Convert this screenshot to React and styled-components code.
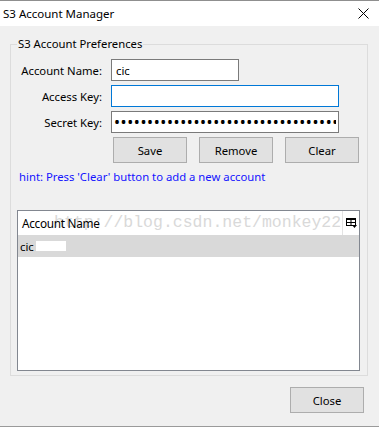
import React from 'react'
import styled, { createGlobalStyle } from 'styled-components'

const GlobalStyle = createGlobalStyle`
    html, body { margin: 0; padding: 0; }
    body {
        font-family: "Noto Sans", "Open Sans", sans-serif;
        font-size: 11.3px;
        background: #f0f0f0;
        color: #000;
    }
`

const Window = styled.div`
    width: 379px;
    height: 427px;
    box-sizing: border-box;
    display: flex;
    flex-direction: column;
    border-top: 1px solid #8f8f8f;
    border-bottom: 1px solid #9a9a9a;
`

const TitleBar = styled.div`
    height: 25px;
    background: #fff;
    display: flex;
    align-items: center;
    justify-content: space-between;
    padding: 0 10px 0 3px;
    font-size: 11.5px;
`

const Body = styled.div`
    flex: 1;
    background: #f0f0f0;
    padding: 10px 11px 0 10px;
    display: flex;
    flex-direction: column;
`

const GroupBox = styled.fieldset`
    margin: 0;
    padding: 7px 7px 4px 6px;
    border: 1px solid #dcdcdc;
    min-width: 0;
`

const Legend = styled.legend`
    padding: 0 1px;
    line-height: 16px;
`

const FormRow = styled.div`
    display: flex;
    align-items: center;
    height: 22px;
    margin-bottom: 4px;
`

const Label = styled.label`
    width: 85px;
    margin-right: 9px;
    text-align: right;
    white-space: nowrap;
`

const TextBox = styled.input`
    width: ${p => p.w}px;
    height: 22px;
    box-sizing: border-box;
    border: 1px solid ${p => (p.focused ? '#0078d7' : '#7a7a7a')};
    padding: 0 ${p => (p.type === 'password' ? 2 : 4)}px;
    font-family: inherit;
    font-size: ${p => (p.type === 'password' ? 16 : 11.3)}px;
    letter-spacing: ${p => (p.type === 'password' ? '0.6px' : 'normal')};
    background: #fff;
    outline: none;
    color: #000;
`

const ButtonRow = styled.div`
    display: flex;
    gap: 12px;
    margin-left: 96px;
`

const Button = styled.button`
    width: 74px;
    height: 26px;
    box-sizing: border-box;
    background: #e1e1e1;
    border: 1px solid #adadad;
    font-family: inherit;
    font-size: 11.3px;
    color: #000;
    padding: 0;
`

const Hint = styled.div`
    margin-top: 6px;
    padding-left: 2px;
    line-height: 16px;
    color: #1414ff;
`

const Table = styled.div`
    margin-top: 25px;
    height: 161px;
    box-sizing: border-box;
    border: 1px solid #828790;
    background: #fff;
`

const HeaderRow = styled.div`
    display: flex;
    height: 24px;
`

const HeaderCell = styled.div`
    position: relative;
    flex: 1;
    overflow: hidden;
    border-right: 1px solid #e3e3e3;
    display: flex;
    align-items: center;
    padding-left: 4px;
`

const HeaderText = styled.span`
    position: relative;
    z-index: 1;
    font-size: 11.8px;
    letter-spacing: -0.3px;
`

const Watermark = styled.span`
    position: absolute;
    left: 36px;
    top: 2px;
    font-family: "Liberation Mono", monospace;
    font-size: 16.5px;
    color: #d9d9d9;
    white-space: nowrap;
`

const ChooserCell = styled.div`
    width: 16px;
    display: flex;
    align-items: center;
    justify-content: center;
`

const DataRow = styled.div`
    height: 22px;
    background: ${p => (p.selected ? '#d9d9d9' : 'transparent')};
    display: flex;
    align-items: center;
    padding-left: 2px;
`

const Redact = styled.span`
    display: inline-block;
    width: 30px;
    height: 10px;
    background: #fff;
    margin-left: 2px;
`

const Footer = styled.div`
    display: flex;
    justify-content: flex-end;
    margin-top: 11px;
    padding-right: 4px;
`

const CloseIcon = () => (
    <svg width="11" height="11" viewBox="0 0 11 11">
        <path d="M0.5 0.5 L10.5 10.5 M10.5 0.5 L0.5 10.5" stroke="#000" strokeWidth="1" fill="none" />
    </svg>
)

const ColumnChooserIcon = () => (
    <svg width="11" height="10" viewBox="0 0 11 10">
        <rect x="0.5" y="0.5" width="9" height="7" fill="none" stroke="#000" />
        <rect x="0" y="0" width="10" height="2" fill="#000" />
        <path d="M5 2 V8 M0.5 4.5 H9.5" stroke="#000" />
        <path d="M6 7 H11 L8.5 10 Z" fill="#000" />
    </svg>
)

export default function App() {
    return (
        <>
            <GlobalStyle />
            <Window>
                <TitleBar>
                    <span>S3 Account Manager</span>
                    <CloseIcon />
                </TitleBar>
                <Body>
                    <GroupBox>
                        <Legend>S3 Account Preferences</Legend>
                        <FormRow>
                            <Label>Account Name:</Label>
                            <TextBox w={128} defaultValue="cic" readOnly />
                        </FormRow>
                        <FormRow>
                            <Label>Access Key:</Label>
                            <TextBox w={228} focused readOnly defaultValue="" />
                        </FormRow>
                        <FormRow>
                            <Label>Secret Key:</Label>
                            <TextBox w={228} type="password" readOnly defaultValue="abcdefghijklmnopqrstuvwxyz0123456789abcdefgh" />
                        </FormRow>
                        <ButtonRow>
                            <Button>Save</Button>
                            <Button>Remove</Button>
                            <Button>Clear</Button>
                        </ButtonRow>
                        <Hint>hint: Press 'Clear' button to add a new account</Hint>
                        <Table>
                            <HeaderRow>
                                <HeaderCell>
                                    <Watermark>http://blog.csdn.net/monkey22</Watermark>
                                    <HeaderText>Account Name</HeaderText>
                                </HeaderCell>
                                <ChooserCell>
                                    <ColumnChooserIcon />
                                </ChooserCell>
                            </HeaderRow>
                            <DataRow selected>
                                cic<Redact />
                            </DataRow>
                        </Table>
                    </GroupBox>
                    <Footer>
                        <Button>Close</Button>
                    </Footer>
                </Body>
            </Window>
        </>
    )
}
